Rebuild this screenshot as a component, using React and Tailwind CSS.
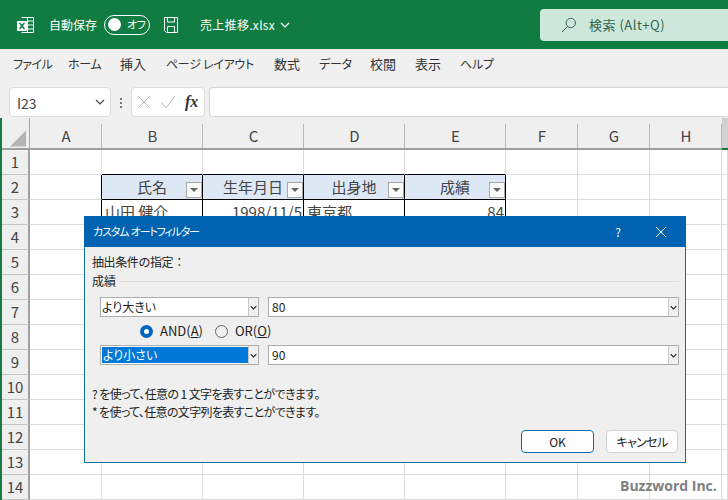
const ui = { fontFamily: '"Noto Sans CJK JP", sans-serif' };

function Chevron({ className, width = 1.2 }) {
  return (
    <svg viewBox="0 0 10 6" className={className} fill="none" stroke="currentColor" strokeWidth={width}>
      <path d="M1 1l4 4 4-4" />
    </svg>
  );
}

function FilterBtn() {
  return (
    <span className="absolute right-0 top-[7px] flex h-[16px] w-[16px] items-center justify-center border border-[#a9a9a9] bg-[#fafafa]">
      <span className="h-0 w-0 border-x-[4px] border-t-[4px] border-x-transparent border-t-[#666]" />
    </span>
  );
}

const columns = ['A', 'B', 'C', 'D', 'E', 'F', 'G', 'H'];

function ColumnHeader() {
  return (
    <div className="grid h-[32px] grid-cols-[28px_72px_101px_101px_101px_101px_72px_72px_72px_1fr] bg-[#efefef] text-[15px] text-[#444]">
      <div className="relative border-r border-b-2 border-r-[#a8a8a8] border-b-[#9e9e9e]">
        <svg viewBox="0 0 16 16" className="absolute right-[3px] bottom-[1px] h-[17px] w-[16px]">
          <path d="M16 0v16H0z" fill="#b4b4b4" />
        </svg>
      </div>
      {columns.map((c) => (
        <div key={c} className="relative flex items-end justify-center border-b-2 border-b-[#9e9e9e] pb-[1px] leading-[22px]">
          {c}
          <span className="absolute right-0 bottom-0 h-[24px] w-px bg-[#b8b8b8]" />
        </div>
      ))}
      <div className="border-b-2 border-b-[#107c41] bg-[#d2d2d2]" />
    </div>
  );
}

const plain = 'relative border-r border-b border-[#dcdcdc]';
const head = 'relative border-r border-b border-black bg-[#dde8f4] text-center leading-[24px]';
const body = 'relative border-r border-b border-black leading-[24px]';

function Row({ n, children }) {
  return (
    <div className="grid h-[25px] grid-cols-[28px_72px_101px_101px_101px_101px_72px_72px_72px_1fr] text-[15px] text-[#444]">
      <div className="flex items-center justify-center border-r-2 border-b border-r-[#a0a0a0] border-b-[#c4c4c4] bg-[#efefef] text-[#444]">
        {n}
      </div>
      {children}
    </div>
  );
}

function Blank({ n }) {
  return (
    <Row n={n}>
      <div className={plain} />
      <div className={plain} />
      <div className={plain} />
      <div className={plain} />
      <div className={plain} />
      <div className={plain} />
      <div className={plain} />
      <div className={plain} />
      <div className={plain} />
    </Row>
  );
}

function Sheet() {
  return (
    <div className="border-l-2 border-l-[#1a7a46]" style={ui}>
      <ColumnHeader />
      <Row n={1}>
        <div className={plain} />
        <div className="relative border-r border-b border-r-[#dcdcdc] border-b-black" />
        <div className="relative border-r border-b border-r-[#dcdcdc] border-b-black" />
        <div className="relative border-r border-b border-r-[#dcdcdc] border-b-black" />
        <div className="relative border-r border-b border-r-[#dcdcdc] border-b-black" />
        <div className={plain} />
        <div className={plain} />
        <div className={plain} />
        <div className={plain} />
      </Row>
      <Row n={2}>
        <div className="relative border-r border-b border-r-black border-b-[#dcdcdc]" />
        <div className={head}><span>氏名</span><FilterBtn /></div>
        <div className={head}><span>生年月日</span><FilterBtn /></div>
        <div className={head}><span>出身地</span><FilterBtn /></div>
        <div className={head}><span>成績</span><FilterBtn /></div>
        <div className={plain} />
        <div className={plain} />
        <div className={plain} />
        <div className={plain} />
      </Row>
      <Row n={3}>
        <div className="relative border-r border-b border-r-black border-b-[#dcdcdc]" />
        <div className={`${body} pl-[3px]`}>山田 健介</div>
        <div className={`${body} pr-[1px] text-right`}>1998/11/5</div>
        <div className={`${body} pl-[3px]`}>東京都</div>
        <div className={`${body} pr-[1px] text-right`}>84</div>
        <div className={plain} />
        <div className={plain} />
        <div className={plain} />
        <div className={plain} />
      </Row>
      {[4, 5, 6, 7, 8, 9, 10, 11, 12, 13, 14].map((n) => (
        <Blank key={n} n={n} />
      ))}
    </div>
  );
}

function TitleBar() {
  return (
    <div className="flex h-[49px] items-center whitespace-nowrap bg-[#107c41] text-white" style={ui}>
      <svg viewBox="0 0 18 18" className="ml-[16px] h-[18px] w-[18px]">
        <path d="M5.500 1.500h12v15h-12" fill="none" stroke="#fff" />
        <path d="M11.500 1.500v15M11.500 5h6M11.500 9h6M11.500 13h6" stroke="#fff" fill="none" />
        <rect x="1" y="5" width="10" height="10" rx="1" fill="#fff" />
        <path d="M3.600 7l4.800 6M8.400 7l-4.800 6" stroke="#107c41" strokeWidth="1.500" />
      </svg>
      <span className="ml-[15px] text-[12px]">自動保存</span>
      <span className="ml-[7px] flex h-[20px] w-[46px] shrink-0 items-center rounded-full border border-white pl-[3px]">
        <span className="h-[13px] w-[13px] shrink-0 rounded-full bg-white" />
        <span className="ml-[6px] text-[11px] leading-none tracking-[-0.5px] [font-feature-settings:'palt']">オフ</span>
      </span>
      <svg viewBox="0 0 16 16" className="ml-[13px] h-[16px] w-[16px] shrink-0" fill="none" stroke="#fff">
        <path d="M1.500.5h13v15h-11l-2-2z" />
        <path d="M4.500.5v4.500h7V.5M4.500 15.500V9.500h7v6" />
      </svg>
      <span className="ml-[21px] text-[12px] tracking-[0.3px]">売上推移.xlsx</span>
      <Chevron className="ml-[5px] h-[6px] w-[10px]" />
      <div className="ml-auto flex h-[32px] w-[188px] items-center rounded-l-[4px] bg-[#cde8da] text-[#33664f]">
        <svg viewBox="0 0 16 16" className="ml-[21px] h-[16px] w-[16px]" fill="none" stroke="#33664f">
          <circle cx="9.800" cy="6" r="4.700" />
          <path d="M6.500 9.500L1 15" />
        </svg>
        <span className="ml-[12px] text-[13px] tracking-[0.5px]">検索 (Alt+Q)</span>
      </div>
    </div>
  );
}

function Menu() {
  const items = [
    ['ファイル', 'w-[55px] text-[12px] tracking-[-0.6px]'],
    ['ホーム', 'w-[52px] text-[12px] tracking-[-0.3px]'],
    ['挿入', 'w-[46px] text-[13px]'],
    ['ページ レイアウト', 'w-[108px] text-[12px] tracking-[-0.3px]'],
    ['数式', 'w-[45px] text-[13px]'],
    ['データ', 'w-[51px] text-[12px] tracking-[-0.2px]'],
    ['校閲', 'w-[45px] text-[13px]'],
    ['表示', 'w-[45px] text-[13px]'],
    ['ヘルプ', 'w-[45px] text-[12px] tracking-[-0.2px]'],
  ];
  return (
    <div className="flex h-[38px] items-center whitespace-nowrap bg-[#f0f0f0] pl-[13px] pb-[8px] text-[#333] [font-feature-settings:'palt']" style={ui}>
      {items.map(([m, cls]) => (
        <span key={m} className={cls}>{m}</span>
      ))}
    </div>
  );
}

function FormulaBar() {
  return (
    <div className="flex h-[31px] items-stretch bg-[#f0f0f0] pl-[9px]" style={ui}>
      <div className="mb-[1px] flex w-[102px] items-center justify-between rounded-[4px] border border-[#dcdcdc] bg-white pr-[5px] pl-[7px] text-[14px] text-[#444]">
        <span className="pt-[2px]">I23</span>
        <Chevron className="h-[6px] w-[10px]" />
      </div>
      <div className="flex w-[20px] flex-col items-center justify-center gap-[2px]">
        <span className="h-[2px] w-[2px] bg-[#777]" />
        <span className="h-[2px] w-[2px] bg-[#777]" />
        <span className="h-[2px] w-[2px] bg-[#777]" />
      </div>
      <div className="mb-[1px] flex w-[74px] items-center rounded-[4px] border border-[#dcdcdc] bg-white">
        <svg viewBox="0 0 14 14" className="ml-[5px] h-[14px] w-[14px]" fill="none" stroke="#bdbdbd">
          <path d="M1 1l12 12M13 1L1 13" />
        </svg>
        <svg viewBox="0 0 16 14" className="ml-[9px] h-[14px] w-[16px]" fill="none" stroke="#bdbdbd">
          <path d="M1 7l5 6L15 1" />
        </svg>
        <span className="ml-[9px] text-[16px] font-bold italic leading-none text-[#333]" style={{ fontFamily: '"Liberation Serif", serif' }}>fx</span>
      </div>
      <div className="mb-[1px] ml-[4px] flex-1 rounded-l-[4px] border-y border-l border-[#d4d4d4] bg-white" />
    </div>
  );
}

function ComboArrow() {
  return (
    <span className="flex w-[10px] shrink-0 items-center justify-center border-l border-[#c8c8c8] bg-[#f0f0f0] text-[#222]">
      <Chevron className="h-[5px] w-[7px]" width={1.6} />
    </span>
  );
}

function Combo({ className, children }) {
  return (
    <div className={`flex h-[20px] border border-[#adadad] bg-white ${className}`}>
      <span className="flex flex-1 items-center pl-[1px]">{children}</span>
      <ComboArrow />
    </div>
  );
}

function Dialog() {
  return (
    <div
      className="absolute top-[216px] left-[84px] flex h-[247px] w-[602px] flex-col border-r border-b border-l border-[#0f6f9e] bg-[#efefef] text-[12px] text-[#222] [font-feature-settings:'palt']"
      style={ui}
    >
      <div className="mx-[-1px] flex h-[31px] shrink-0 items-center bg-[#0063b1] pr-[19px] pl-[9px] text-white">
        <span className="text-[11px] tracking-[-1.2px]">カスタム&nbsp;&nbsp;オートフィルター</span>
        <span className="ml-auto text-[12px]">?</span>
        <svg viewBox="0 0 12 12" className="ml-[34px] h-[12px] w-[12px]" fill="none" stroke="#fff">
          <path d="M1 1l10 10M11 1L1 11" />
        </svg>
      </div>
      <div className="flex flex-col pr-[6px] pl-[7px]">
        <div className="mt-[6px] h-[18px] leading-[18px] tracking-[-0.4px] [font-feature-settings:normal]">抽出条件の指定：</div>
        <div className="mt-[1px] flex h-[18px] items-center leading-[18px]">
          成績
          <span className="ml-[4px] h-px flex-1 bg-[#dcdcdc]" />
        </div>
        <div className="mt-[7px] flex gap-[9px] pl-[8px]">
          <Combo className="w-[159px]">より大きい</Combo>
          <Combo className="flex-1"><span className="pl-[2px]">80</span></Combo>
        </div>
        <div className="flex h-[28px] items-center pl-[48px] text-[13px]">
          <span className="flex h-[13px] w-[13px] items-center justify-center rounded-full bg-[#0067c0]">
            <span className="h-[5px] w-[5px] rounded-full bg-white" />
          </span>
          <span className="ml-[7px]">AND(<span className="underline">A</span>)</span>
          <span className="ml-[12px] h-[13px] w-[13px] rounded-full border border-[#666]" />
          <span className="ml-[7px]">OR(<span className="underline">O</span>)</span>
        </div>
        <div className="flex gap-[9px] pl-[8px]">
          <Combo className="w-[159px]">
            <span className="flex h-[16px] w-full items-center bg-[#0078d7] pl-[1px] text-white">より小さい</span>
          </Combo>
          <Combo className="flex-1"><span className="pl-[2px]">90</span></Combo>
        </div>
        <div className="mt-[20px] h-[18px] leading-[18px] tracking-[-0.6px]">? を使って、任意の 1 文字を表すことができます。</div>
        <div className="h-[18px] leading-[18px] tracking-[-0.65px]">* を使って、任意の文字列を表すことができます。</div>
        <div className="mt-[9px] flex justify-end gap-[12px] pr-[1px]">
          <button className="h-[23px] w-[73px] rounded-[4px] border border-[#0f6cab] bg-[#fdfdfd] text-[12px]">OK</button>
          <button className="h-[23px] w-[72px] rounded-[4px] border border-[#d0d0d0] bg-[#fdfdfd] text-[12px] tracking-[-0.6px]">キャンセル</button>
        </div>
      </div>
    </div>
  );
}

export default function App() {
  return (
    <div className="relative h-[500px] w-[728px] overflow-hidden bg-white">
      <TitleBar />
      <Menu />
      <FormulaBar />
      <Sheet />
      <Dialog />
      <span className="absolute top-[475px] left-[620px] text-[14px] font-bold text-[#808080]" style={{ fontFamily: '"Open Sans", sans-serif' }}>
        Buzzword Inc.
      </span>
    </div>
  );
}
